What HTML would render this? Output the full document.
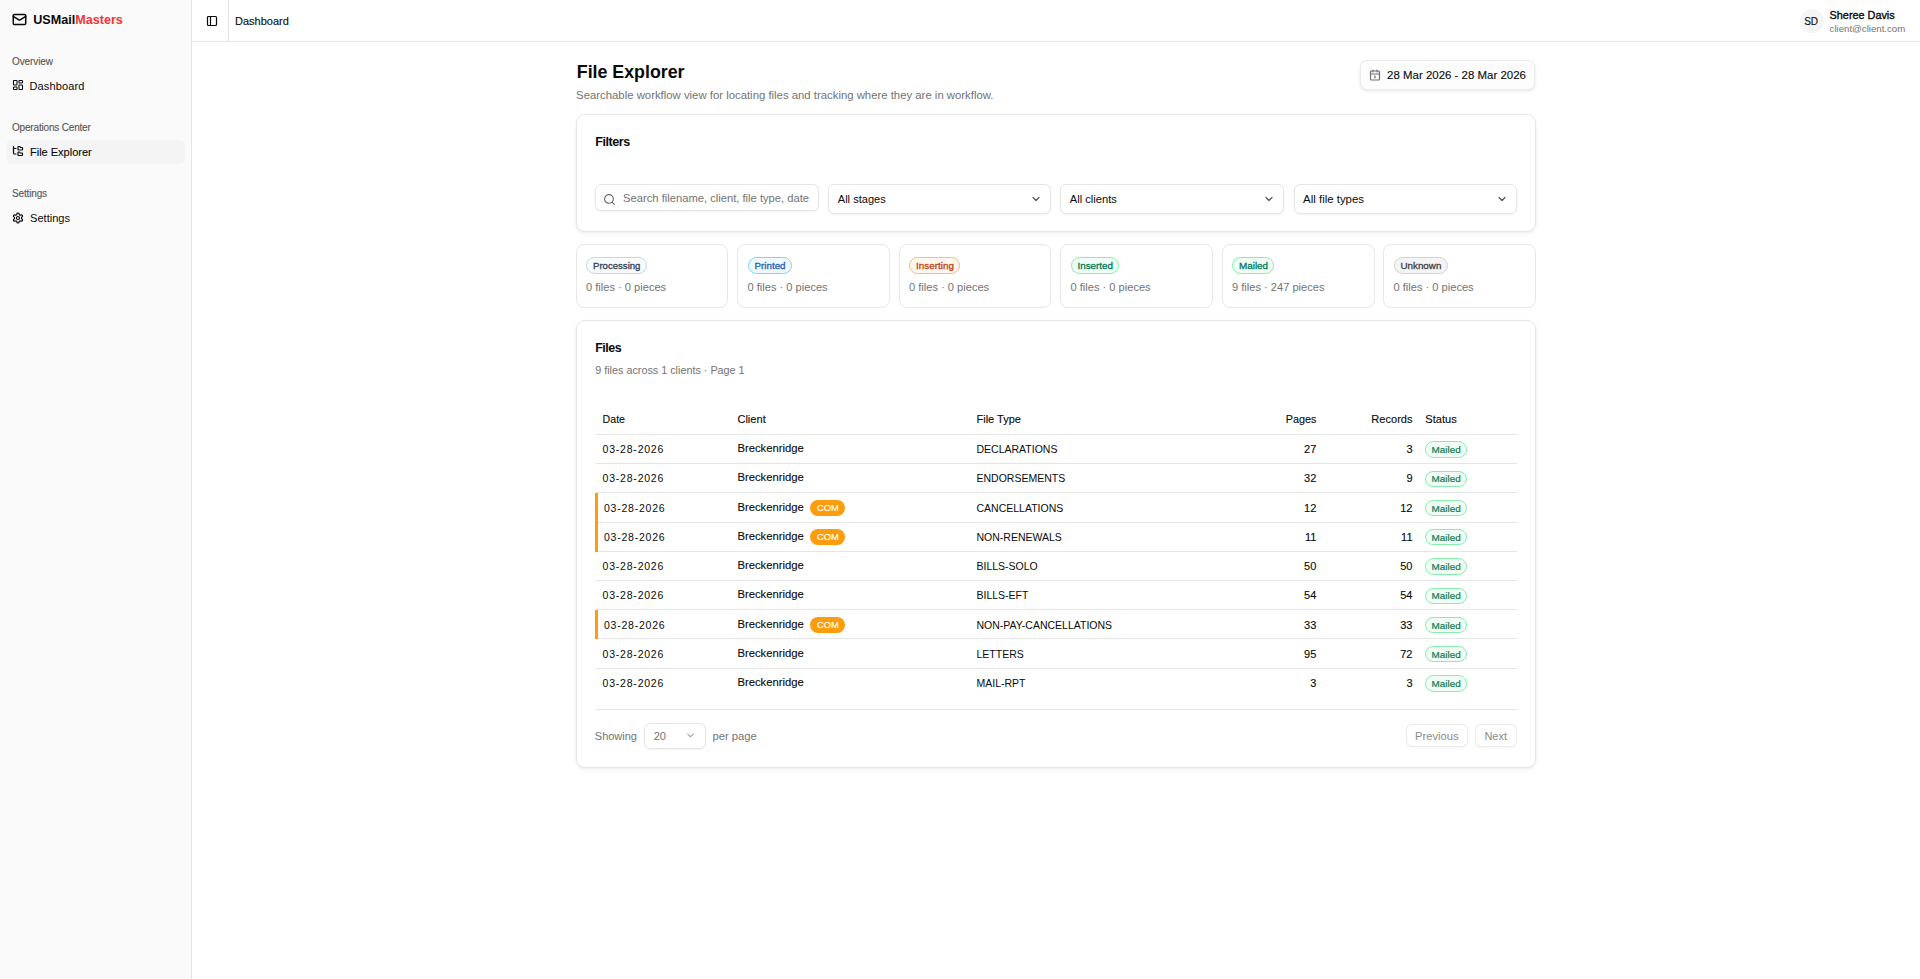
<!DOCTYPE html>
<html><head><meta charset="utf-8"><title>File Explorer</title>
<style>
html,body{margin:0;padding:0;background:#fff;}
body{width:1920px;height:979px;position:relative;overflow:hidden;font-family:"Liberation Sans",sans-serif;}
.t{position:absolute;white-space:nowrap;}
.b{position:absolute;}
.i{position:absolute;display:block;}
</style></head><body>
<div class="b" style="left:0px;top:0px;width:191px;height:979px;background:#fafafa;"></div>
<div class="b" style="left:191px;top:0px;width:1px;height:979px;background:#e5e5e5;"></div>
<svg class="i" style="left:12px;top:12px;" width="15" height="15" viewBox="0 0 24 24" fill="none" stroke="#0a0a0a" stroke-width="2.4" stroke-linecap="round" stroke-linejoin="round"><rect width="20" height="16" x="2" y="4" rx="2"/><path d="m22 7-8.97 5.7a1.94 1.94 0 0 1-2.06 0L2 7"/></svg>
<div class="t" style="top:12px;font-size:12.6px;line-height:16px;color:#0a0a0a;font-weight:700;left:33.20px;">USMail<span style="color:#ef3535">Masters</span></div>
<div class="t" style="top:54px;font-size:10px;line-height:16px;color:#555555;letter-spacing:-0.1px;-webkit-text-stroke:0.1px #555555;left:12.00px;">Overview</div>
<svg class="i" style="left:12px;top:79px;" width="12" height="12" viewBox="0 0 24 24" fill="none" stroke="#0a0a0a" stroke-width="2.2" stroke-linecap="round" stroke-linejoin="round"><rect width="7" height="9" x="3" y="3" rx="1"/><rect width="7" height="5" x="14" y="3" rx="1"/><rect width="7" height="9" x="14" y="12" rx="1"/><rect width="7" height="5" x="3" y="16" rx="1"/></svg>
<div class="t" style="top:78px;font-size:11px;line-height:16px;color:#0a0a0a;letter-spacing:0.15px;left:29.40px;">Dashboard</div>
<div class="t" style="top:120px;font-size:10px;line-height:16px;color:#555555;letter-spacing:-0.18px;-webkit-text-stroke:0.1px #555555;left:12.00px;">Operations Center</div>
<div class="b" style="left:6px;top:140px;width:179px;height:23.5px;background:#f4f4f4;border-radius:6px;"></div>
<svg class="i" style="left:12px;top:145.3px;" width="12" height="12" viewBox="0 0 24 24" fill="none" stroke="#0a0a0a" stroke-width="2.4" stroke-linecap="round" stroke-linejoin="round"><path d="M20 10a1 1 0 0 0 1-1V6a1 1 0 0 0-1-1h-2.5a1 1 0 0 1-.8-.4l-.9-1.2A1 1 0 0 0 15 3h-2a1 1 0 0 0-1 1v5a1 1 0 0 0 1 1Z"/><path d="M20 21a1 1 0 0 0 1-1v-3a1 1 0 0 0-1-1h-2.9a1 1 0 0 1-.88-.55l-.42-.85a1 1 0 0 0-.92-.6H13a1 1 0 0 0-1 1v5a1 1 0 0 0 1 1Z"/><path d="M3 5a2 2 0 0 0 2 2h3"/><path d="M3 3v13a2 2 0 0 0 2 2h3"/></svg>
<div class="t" style="top:144px;font-size:11px;line-height:16px;color:#0a0a0a;-webkit-text-stroke:0.12px #0a0a0a;left:30.00px;">File Explorer</div>
<div class="t" style="top:186px;font-size:10px;line-height:16px;color:#555555;letter-spacing:-0.15px;-webkit-text-stroke:0.1px #555555;left:12.00px;">Settings</div>
<svg class="i" style="left:12px;top:211.5px;" width="12" height="12" viewBox="0 0 24 24" fill="none" stroke="#0a0a0a" stroke-width="2.4" stroke-linecap="round" stroke-linejoin="round"><path d="M12.22 2h-.44a2 2 0 0 0-2 2v.18a2 2 0 0 1-1 1.73l-.43.25a2 2 0 0 1-2 0l-.15-.08a2 2 0 0 0-2.73.73l-.22.38a2 2 0 0 0 .73 2.73l.15.1a2 2 0 0 1 1 1.72v.51a2 2 0 0 1-1 1.74l-.15.09a2 2 0 0 0-.73 2.73l.22.38a2 2 0 0 0 2.73.73l.15-.08a2 2 0 0 1 2 0l.43.25a2 2 0 0 1 1 1.73V20a2 2 0 0 0 2 2h.44a2 2 0 0 0 2-2v-.18a2 2 0 0 1 1-1.73l.43-.25a2 2 0 0 1 2 0l.15.08a2 2 0 0 0 2.73-.73l.22-.39a2 2 0 0 0-.73-2.73l-.15-.08a2 2 0 0 1-1-1.74v-.5a2 2 0 0 1 1-1.74l.15-.09a2 2 0 0 0 .73-2.73l-.22-.38a2 2 0 0 0-2.73-.73l-.15.08a2 2 0 0 1-2 0l-.43-.25a2 2 0 0 1-1-1.73V4a2 2 0 0 0-2-2z"/><circle cx="12" cy="12" r="3"/></svg>
<div class="t" style="top:210px;font-size:11.1px;line-height:16px;color:#0a0a0a;left:30.00px;">Settings</div>
<div class="b" style="left:192px;top:41px;width:1728px;height:1px;background:#e5e5e5;"></div>
<svg class="i" style="left:205.5px;top:15px;" width="12" height="12" viewBox="0 0 24 24" fill="none" stroke="#0a0a0a" stroke-width="2.4" stroke-linecap="round" stroke-linejoin="round"><rect width="18" height="18" x="3" y="3" rx="2"/><path d="M9 3v18"/></svg>
<div class="b" style="left:228px;top:0px;width:1px;height:41px;background:#e5e5e5;"></div>
<div class="t" style="top:13px;font-size:11px;line-height:16px;color:#0a0a0a;-webkit-text-stroke:0.12px #0a0a0a;left:235.00px;">Dashboard</div>
<div class="b" style="left:1799.5px;top:9px;width:24px;height:24px;background:#f5f5f5;border-radius:50%;"></div>
<div class="t" style="top:14px;font-size:10px;line-height:16px;color:#0a0a0a;-webkit-text-stroke:0.12px #0a0a0a;left:1804.20px;">SD</div>
<div class="t" style="top:7px;font-size:10.85px;line-height:16px;color:#0a0a0a;-webkit-text-stroke:0.35px #0a0a0a;left:1829.60px;">Sheree Davis</div>
<div class="t" style="top:21px;font-size:9.65px;line-height:16px;color:#737373;left:1829.60px;">client@client.com</div>
<div class="t" style="top:64px;font-size:17.8px;line-height:16px;color:#0a0a0a;font-weight:700;left:576.80px;">File Explorer</div>
<div class="t" style="top:87px;font-size:11.35px;line-height:16px;color:#737373;left:576.10px;">Searchable workflow view for locating files and tracking where they are in workflow.</div>
<div class="b" style="left:1360px;top:60px;width:175px;height:29.5px;background:#fdfdfd;border:1px solid #ebebeb;border-radius:7px;box-shadow:0 1px 3px rgba(0,0,0,.07),0 2px 5px rgba(0,0,0,.03);box-sizing:border-box;"></div>
<svg class="i" style="left:1368.5px;top:69px;" width="12" height="12" viewBox="0 0 24 24" fill="none" stroke="#737373" stroke-width="2.4" stroke-linecap="round" stroke-linejoin="round"><path d="M11 14h1v4"/><path d="M16 2v4"/><path d="M3 10h18"/><path d="M8 2v4"/><rect x="3" y="4" width="18" height="18" rx="2"/></svg>
<div class="t" style="top:67px;font-size:11.46px;line-height:16px;color:#0a0a0a;-webkit-text-stroke:0.12px #0a0a0a;left:1387.10px;">28 Mar 2026 - 28 Mar 2026</div>
<div class="b" style="left:576px;top:114px;width:960px;height:118px;background:#fff;border:1px solid #e7e7ea;border-radius:9px;box-shadow:0 1px 2px rgba(0,0,0,.05),0 2px 6px rgba(0,0,0,.04);box-sizing:border-box;"></div>
<div class="t" style="top:134px;font-size:12.6px;line-height:16px;color:#0a0a0a;font-weight:700;letter-spacing:-0.45px;left:595.20px;">Filters</div>
<div class="b" style="left:595px;top:184px;width:223.5px;height:26.5px;background:#fff;border:1px solid #e5e5e5;border-radius:6px;box-shadow:0 1px 2px rgba(0,0,0,.05);box-sizing:border-box;"></div>
<svg class="i" style="left:603.4px;top:192.6px;" width="13" height="13" viewBox="0 0 24 24" fill="none" stroke="#6b6b6b" stroke-width="2.1" stroke-linecap="round" stroke-linejoin="round"><circle cx="11" cy="11" r="8"/><path d="m21 21-4.3-4.3"/></svg>
<div class="t" style="top:190px;font-size:11.19px;line-height:16px;color:#737373;left:623.10px;">Search filename, client, file type, date</div>
<div class="b" style="left:828px;top:184px;width:223px;height:29.5px;background:#fff;border:1px solid #e5e5e5;border-radius:6px;box-shadow:0 1px 2px rgba(0,0,0,.05);box-sizing:border-box;"></div>
<div class="t" style="top:191px;font-size:11.06px;line-height:16px;color:#0a0a0a;left:837.80px;">All stages</div>
<svg class="i" style="left:1030px;top:192.9px;" width="12" height="12" viewBox="0 0 24 24" fill="none" stroke="#525252" stroke-width="2.4" stroke-linecap="round" stroke-linejoin="round"><path d="m6 9 6 6 6-6"/></svg>
<div class="b" style="left:1060px;top:184px;width:224px;height:29.5px;background:#fff;border:1px solid #e5e5e5;border-radius:6px;box-shadow:0 1px 2px rgba(0,0,0,.05);box-sizing:border-box;"></div>
<div class="t" style="top:191px;font-size:11.14px;line-height:16px;color:#0a0a0a;left:1069.80px;">All clients</div>
<svg class="i" style="left:1263.3px;top:192.9px;" width="12" height="12" viewBox="0 0 24 24" fill="none" stroke="#525252" stroke-width="2.4" stroke-linecap="round" stroke-linejoin="round"><path d="m6 9 6 6 6-6"/></svg>
<div class="b" style="left:1294px;top:184px;width:223px;height:29.5px;background:#fff;border:1px solid #e5e5e5;border-radius:6px;box-shadow:0 1px 2px rgba(0,0,0,.05);box-sizing:border-box;"></div>
<div class="t" style="top:191px;font-size:11.43px;line-height:16px;color:#0a0a0a;left:1303.10px;">All file types</div>
<svg class="i" style="left:1495.6px;top:192.9px;" width="12" height="12" viewBox="0 0 24 24" fill="none" stroke="#525252" stroke-width="2.4" stroke-linecap="round" stroke-linejoin="round"><path d="m6 9 6 6 6-6"/></svg>
<div class="b" style="left:576px;top:244px;width:152px;height:64px;background:#fff;border:1px solid #e8e8e8;border-radius:8px;box-sizing:border-box;"></div>
<div class="b" style="left:586.0px;top:257px;width:61px;height:16.5px;background:#f8fafc;border:1px solid #cbd5e1;border-radius:9px;box-sizing:border-box;"></div>
<div class="t" style="top:258px;font-size:9.61px;line-height:16px;color:#334155;-webkit-text-stroke:0.3px #334155;left:593.00px;">Processing</div>
<div class="t" style="top:279px;font-size:11.1px;line-height:16px;color:#737373;left:586.00px;">0 files · 0 pieces</div>
<div class="b" style="left:737px;top:244px;width:153px;height:64px;background:#fff;border:1px solid #e8e8e8;border-radius:8px;box-sizing:border-box;"></div>
<div class="b" style="left:747.5px;top:257px;width:44.5px;height:16.5px;background:#f0f9ff;border:1px solid #7dd3fc;border-radius:9px;box-sizing:border-box;"></div>
<div class="t" style="top:258px;font-size:9.8px;line-height:16px;color:#1d5fb8;-webkit-text-stroke:0.3px #1d5fb8;left:754.50px;">Printed</div>
<div class="t" style="top:279px;font-size:11.1px;line-height:16px;color:#737373;left:747.50px;">0 files · 0 pieces</div>
<div class="b" style="left:899px;top:244px;width:152px;height:64px;background:#fff;border:1px solid #e8e8e8;border-radius:8px;box-sizing:border-box;"></div>
<div class="b" style="left:909.0px;top:257px;width:51px;height:16.5px;background:#fff7ed;border:1px solid #fdba74;border-radius:9px;box-sizing:border-box;"></div>
<div class="t" style="top:258px;font-size:9.9px;line-height:16px;color:#c2410c;-webkit-text-stroke:0.3px #c2410c;left:916.00px;">Inserting</div>
<div class="t" style="top:279px;font-size:11.1px;line-height:16px;color:#737373;left:909.00px;">0 files · 0 pieces</div>
<div class="b" style="left:1060px;top:244px;width:153px;height:64px;background:#fff;border:1px solid #e8e8e8;border-radius:8px;box-sizing:border-box;"></div>
<div class="b" style="left:1070.5px;top:257px;width:48.5px;height:16.5px;background:#f0fdf4;border:1px solid #86efac;border-radius:9px;box-sizing:border-box;"></div>
<div class="t" style="top:258px;font-size:9.84px;line-height:16px;color:#047857;-webkit-text-stroke:0.3px #047857;left:1077.50px;">Inserted</div>
<div class="t" style="top:279px;font-size:11.1px;line-height:16px;color:#737373;left:1070.50px;">0 files · 0 pieces</div>
<div class="b" style="left:1222px;top:244px;width:153px;height:64px;background:#fff;border:1px solid #e8e8e8;border-radius:8px;box-sizing:border-box;"></div>
<div class="b" style="left:1232.0px;top:257px;width:42.4px;height:16.5px;background:#f0fdf4;border:1px solid #86efac;border-radius:9px;box-sizing:border-box;"></div>
<div class="t" style="top:258px;font-size:9.9px;line-height:16px;color:#047857;-webkit-text-stroke:0.3px #047857;left:1239.00px;">Mailed</div>
<div class="t" style="top:279px;font-size:11.1px;line-height:16px;color:#737373;left:1232.00px;">9 files · 247 pieces</div>
<div class="b" style="left:1383px;top:244px;width:153px;height:64px;background:#fff;border:1px solid #e8e8e8;border-radius:8px;box-sizing:border-box;"></div>
<div class="b" style="left:1393.5px;top:257px;width:54.1px;height:16.5px;background:#f4f4f5;border:1px solid #d4d4d8;border-radius:9px;box-sizing:border-box;"></div>
<div class="t" style="top:258px;font-size:9.8px;line-height:16px;color:#3f3f46;-webkit-text-stroke:0.3px #3f3f46;left:1400.50px;">Unknown</div>
<div class="t" style="top:279px;font-size:11.1px;line-height:16px;color:#737373;left:1393.50px;">0 files · 0 pieces</div>
<div class="b" style="left:576px;top:320px;width:960px;height:448px;background:#fff;border:1px solid #e7e7ea;border-radius:9px;box-shadow:0 1px 2px rgba(0,0,0,.05),0 2px 6px rgba(0,0,0,.04);box-sizing:border-box;"></div>
<div class="t" style="top:340px;font-size:12.5px;line-height:16px;color:#0a0a0a;font-weight:700;letter-spacing:-0.5px;left:595.20px;">Files</div>
<div class="t" style="top:362px;font-size:10.8px;line-height:16px;color:#737373;left:595.20px;">9 files across 1 clients · Page 1</div>
<div class="t" style="top:411px;font-size:10.6px;line-height:16px;color:#0a0a0a;-webkit-text-stroke:0.12px #0a0a0a;left:602.60px;">Date</div>
<div class="t" style="top:411px;font-size:11.1px;line-height:16px;color:#0a0a0a;-webkit-text-stroke:0.12px #0a0a0a;left:737.40px;">Client</div>
<div class="t" style="top:411px;font-size:11px;line-height:16px;color:#0a0a0a;-webkit-text-stroke:0.12px #0a0a0a;left:976.50px;">File Type</div>
<div class="t" style="top:411px;font-size:10.8px;line-height:16px;color:#0a0a0a;-webkit-text-stroke:0.12px #0a0a0a;right:603.70px;">Pages</div>
<div class="t" style="top:411px;font-size:11.05px;line-height:16px;color:#0a0a0a;-webkit-text-stroke:0.12px #0a0a0a;right:507.50px;">Records</div>
<div class="t" style="top:411px;font-size:11.1px;line-height:16px;color:#0a0a0a;-webkit-text-stroke:0.12px #0a0a0a;left:1425.30px;">Status</div>
<div class="b" style="left:596px;top:434px;width:921px;height:1px;background:#e5e5e5;"></div>
<div class="b" style="left:596px;top:463px;width:921px;height:1px;background:#e5e5e5;"></div>
<div class="t" style="top:441px;font-size:10.5px;line-height:16px;color:#0a0a0a;letter-spacing:0.78px;left:602.60px;">03-28-2026</div>
<div class="t" style="top:440px;font-size:11.27px;line-height:16px;color:#0a0a0a;-webkit-text-stroke:0.12px #0a0a0a;left:737.40px;">Breckenridge</div>
<div class="t" style="top:441px;font-size:10.5px;line-height:16px;color:#0a0a0a;left:976.50px;">DECLARATIONS</div>
<div class="t" style="top:441px;font-size:11px;line-height:16px;color:#0a0a0a;-webkit-text-stroke:0.12px #0a0a0a;right:603.70px;">27</div>
<div class="t" style="top:441px;font-size:11px;line-height:16px;color:#0a0a0a;-webkit-text-stroke:0.12px #0a0a0a;right:507.50px;">3</div>
<div class="b" style="left:1424.7px;top:441.3px;width:42.2px;height:16.3px;background:#f0fdf4;border:1px solid #86efac;border-radius:9px;box-sizing:border-box;"></div>
<div class="t" style="top:442px;font-size:9.9px;line-height:16px;color:#0f7a55;-webkit-text-stroke:0.2px #0f7a55;left:1431.60px;">Mailed</div>
<div class="b" style="left:596px;top:492px;width:921px;height:1px;background:#e5e5e5;"></div>
<div class="t" style="top:470px;font-size:10.5px;line-height:16px;color:#0a0a0a;letter-spacing:0.78px;left:602.60px;">03-28-2026</div>
<div class="t" style="top:469px;font-size:11.27px;line-height:16px;color:#0a0a0a;-webkit-text-stroke:0.12px #0a0a0a;left:737.40px;">Breckenridge</div>
<div class="t" style="top:470px;font-size:10.5px;line-height:16px;color:#0a0a0a;left:976.50px;">ENDORSEMENTS</div>
<div class="t" style="top:470px;font-size:11px;line-height:16px;color:#0a0a0a;-webkit-text-stroke:0.12px #0a0a0a;right:603.70px;">32</div>
<div class="t" style="top:470px;font-size:11px;line-height:16px;color:#0a0a0a;-webkit-text-stroke:0.12px #0a0a0a;right:507.50px;">9</div>
<div class="b" style="left:1424.7px;top:470.55px;width:42.2px;height:16.3px;background:#f0fdf4;border:1px solid #86efac;border-radius:9px;box-sizing:border-box;"></div>
<div class="t" style="top:471px;font-size:9.9px;line-height:16px;color:#0f7a55;-webkit-text-stroke:0.2px #0f7a55;left:1431.60px;">Mailed</div>
<div class="b" style="left:598px;top:522px;width:919px;height:1px;background:#e5e5e5;"></div>
<div class="b" style="left:595px;top:492.5px;width:3px;height:29.75px;background:#fd9d0e;"></div>
<div class="t" style="top:500px;font-size:10.5px;line-height:16px;color:#0a0a0a;letter-spacing:0.78px;left:603.90px;">03-28-2026</div>
<div class="t" style="top:499px;font-size:11.27px;line-height:16px;color:#0a0a0a;-webkit-text-stroke:0.12px #0a0a0a;left:737.40px;">Breckenridge</div>
<div class="b" style="left:810px;top:499.8px;width:35px;height:16px;background:#fd9d0e;border-radius:8px;"></div>
<div class="t" style="top:500px;font-size:9.35px;line-height:16px;color:#fff;-webkit-text-stroke:0.15px #fff;left:817.10px;">COM</div>
<div class="t" style="top:500px;font-size:10.5px;line-height:16px;color:#0a0a0a;left:976.50px;">CANCELLATIONS</div>
<div class="t" style="top:500px;font-size:11px;line-height:16px;color:#0a0a0a;-webkit-text-stroke:0.12px #0a0a0a;right:603.70px;">12</div>
<div class="t" style="top:500px;font-size:11px;line-height:16px;color:#0a0a0a;-webkit-text-stroke:0.12px #0a0a0a;right:507.50px;">12</div>
<div class="b" style="left:1424.7px;top:499.8px;width:42.2px;height:16.3px;background:#f0fdf4;border:1px solid #86efac;border-radius:9px;box-sizing:border-box;"></div>
<div class="t" style="top:501px;font-size:9.9px;line-height:16px;color:#0f7a55;-webkit-text-stroke:0.2px #0f7a55;left:1431.60px;">Mailed</div>
<div class="b" style="left:598px;top:551px;width:919px;height:1px;background:#e5e5e5;"></div>
<div class="b" style="left:595px;top:521.75px;width:3px;height:29.75px;background:#fd9d0e;"></div>
<div class="t" style="top:529px;font-size:10.5px;line-height:16px;color:#0a0a0a;letter-spacing:0.78px;left:603.90px;">03-28-2026</div>
<div class="t" style="top:528px;font-size:11.27px;line-height:16px;color:#0a0a0a;-webkit-text-stroke:0.12px #0a0a0a;left:737.40px;">Breckenridge</div>
<div class="b" style="left:810px;top:529.05px;width:35px;height:16px;background:#fd9d0e;border-radius:8px;"></div>
<div class="t" style="top:529px;font-size:9.35px;line-height:16px;color:#fff;-webkit-text-stroke:0.15px #fff;left:817.10px;">COM</div>
<div class="t" style="top:529px;font-size:10.5px;line-height:16px;color:#0a0a0a;left:976.50px;">NON-RENEWALS</div>
<div class="t" style="top:529px;font-size:11px;line-height:16px;color:#0a0a0a;-webkit-text-stroke:0.12px #0a0a0a;right:603.70px;">11</div>
<div class="t" style="top:529px;font-size:11px;line-height:16px;color:#0a0a0a;-webkit-text-stroke:0.12px #0a0a0a;right:507.50px;">11</div>
<div class="b" style="left:1424.7px;top:529.05px;width:42.2px;height:16.3px;background:#f0fdf4;border:1px solid #86efac;border-radius:9px;box-sizing:border-box;"></div>
<div class="t" style="top:530px;font-size:9.9px;line-height:16px;color:#0f7a55;-webkit-text-stroke:0.2px #0f7a55;left:1431.60px;">Mailed</div>
<div class="b" style="left:596px;top:580px;width:921px;height:1px;background:#e5e5e5;"></div>
<div class="t" style="top:558px;font-size:10.5px;line-height:16px;color:#0a0a0a;letter-spacing:0.78px;left:602.60px;">03-28-2026</div>
<div class="t" style="top:557px;font-size:11.27px;line-height:16px;color:#0a0a0a;-webkit-text-stroke:0.12px #0a0a0a;left:737.40px;">Breckenridge</div>
<div class="t" style="top:558px;font-size:10.5px;line-height:16px;color:#0a0a0a;left:976.50px;">BILLS-SOLO</div>
<div class="t" style="top:558px;font-size:11px;line-height:16px;color:#0a0a0a;-webkit-text-stroke:0.12px #0a0a0a;right:603.70px;">50</div>
<div class="t" style="top:558px;font-size:11px;line-height:16px;color:#0a0a0a;-webkit-text-stroke:0.12px #0a0a0a;right:507.50px;">50</div>
<div class="b" style="left:1424.7px;top:558.3px;width:42.2px;height:16.3px;background:#f0fdf4;border:1px solid #86efac;border-radius:9px;box-sizing:border-box;"></div>
<div class="t" style="top:559px;font-size:9.9px;line-height:16px;color:#0f7a55;-webkit-text-stroke:0.2px #0f7a55;left:1431.60px;">Mailed</div>
<div class="b" style="left:596px;top:609px;width:921px;height:1px;background:#e5e5e5;"></div>
<div class="t" style="top:587px;font-size:10.5px;line-height:16px;color:#0a0a0a;letter-spacing:0.78px;left:602.60px;">03-28-2026</div>
<div class="t" style="top:586px;font-size:11.27px;line-height:16px;color:#0a0a0a;-webkit-text-stroke:0.12px #0a0a0a;left:737.40px;">Breckenridge</div>
<div class="t" style="top:587px;font-size:10.5px;line-height:16px;color:#0a0a0a;left:976.50px;">BILLS-EFT</div>
<div class="t" style="top:587px;font-size:11px;line-height:16px;color:#0a0a0a;-webkit-text-stroke:0.12px #0a0a0a;right:603.70px;">54</div>
<div class="t" style="top:587px;font-size:11px;line-height:16px;color:#0a0a0a;-webkit-text-stroke:0.12px #0a0a0a;right:507.50px;">54</div>
<div class="b" style="left:1424.7px;top:587.55px;width:42.2px;height:16.3px;background:#f0fdf4;border:1px solid #86efac;border-radius:9px;box-sizing:border-box;"></div>
<div class="t" style="top:588px;font-size:9.9px;line-height:16px;color:#0f7a55;-webkit-text-stroke:0.2px #0f7a55;left:1431.60px;">Mailed</div>
<div class="b" style="left:598px;top:638px;width:919px;height:1px;background:#e5e5e5;"></div>
<div class="b" style="left:595px;top:609.5px;width:3px;height:29.75px;background:#fd9d0e;"></div>
<div class="t" style="top:617px;font-size:10.5px;line-height:16px;color:#0a0a0a;letter-spacing:0.78px;left:603.90px;">03-28-2026</div>
<div class="t" style="top:616px;font-size:11.27px;line-height:16px;color:#0a0a0a;-webkit-text-stroke:0.12px #0a0a0a;left:737.40px;">Breckenridge</div>
<div class="b" style="left:810px;top:616.8px;width:35px;height:16px;background:#fd9d0e;border-radius:8px;"></div>
<div class="t" style="top:617px;font-size:9.35px;line-height:16px;color:#fff;-webkit-text-stroke:0.15px #fff;left:817.10px;">COM</div>
<div class="t" style="top:617px;font-size:10.5px;line-height:16px;color:#0a0a0a;left:976.50px;">NON-PAY-CANCELLATIONS</div>
<div class="t" style="top:617px;font-size:11px;line-height:16px;color:#0a0a0a;-webkit-text-stroke:0.12px #0a0a0a;right:603.70px;">33</div>
<div class="t" style="top:617px;font-size:11px;line-height:16px;color:#0a0a0a;-webkit-text-stroke:0.12px #0a0a0a;right:507.50px;">33</div>
<div class="b" style="left:1424.7px;top:616.8px;width:42.2px;height:16.3px;background:#f0fdf4;border:1px solid #86efac;border-radius:9px;box-sizing:border-box;"></div>
<div class="t" style="top:618px;font-size:9.9px;line-height:16px;color:#0f7a55;-webkit-text-stroke:0.2px #0f7a55;left:1431.60px;">Mailed</div>
<div class="b" style="left:596px;top:668px;width:921px;height:1px;background:#e5e5e5;"></div>
<div class="t" style="top:646px;font-size:10.5px;line-height:16px;color:#0a0a0a;letter-spacing:0.78px;left:602.60px;">03-28-2026</div>
<div class="t" style="top:645px;font-size:11.27px;line-height:16px;color:#0a0a0a;-webkit-text-stroke:0.12px #0a0a0a;left:737.40px;">Breckenridge</div>
<div class="t" style="top:646px;font-size:10.5px;line-height:16px;color:#0a0a0a;left:976.50px;">LETTERS</div>
<div class="t" style="top:646px;font-size:11px;line-height:16px;color:#0a0a0a;-webkit-text-stroke:0.12px #0a0a0a;right:603.70px;">95</div>
<div class="t" style="top:646px;font-size:11px;line-height:16px;color:#0a0a0a;-webkit-text-stroke:0.12px #0a0a0a;right:507.50px;">72</div>
<div class="b" style="left:1424.7px;top:646.05px;width:42.2px;height:16.3px;background:#f0fdf4;border:1px solid #86efac;border-radius:9px;box-sizing:border-box;"></div>
<div class="t" style="top:647px;font-size:9.9px;line-height:16px;color:#0f7a55;-webkit-text-stroke:0.2px #0f7a55;left:1431.60px;">Mailed</div>
<div class="t" style="top:675px;font-size:10.5px;line-height:16px;color:#0a0a0a;letter-spacing:0.78px;left:602.60px;">03-28-2026</div>
<div class="t" style="top:674px;font-size:11.27px;line-height:16px;color:#0a0a0a;-webkit-text-stroke:0.12px #0a0a0a;left:737.40px;">Breckenridge</div>
<div class="t" style="top:675px;font-size:10.5px;line-height:16px;color:#0a0a0a;left:976.50px;">MAIL-RPT</div>
<div class="t" style="top:675px;font-size:11px;line-height:16px;color:#0a0a0a;-webkit-text-stroke:0.12px #0a0a0a;right:603.70px;">3</div>
<div class="t" style="top:675px;font-size:11px;line-height:16px;color:#0a0a0a;-webkit-text-stroke:0.12px #0a0a0a;right:507.50px;">3</div>
<div class="b" style="left:1424.7px;top:675.3px;width:42.2px;height:16.3px;background:#f0fdf4;border:1px solid #86efac;border-radius:9px;box-sizing:border-box;"></div>
<div class="t" style="top:676px;font-size:9.9px;line-height:16px;color:#0f7a55;-webkit-text-stroke:0.2px #0f7a55;left:1431.60px;">Mailed</div>
<div class="b" style="left:596px;top:709px;width:921px;height:1px;background:#e5e5e5;"></div>
<div class="t" style="top:728px;font-size:11px;line-height:16px;color:#737373;left:594.80px;">Showing</div>
<div class="b" style="left:644px;top:722.5px;width:62px;height:26.3px;background:#fff;border:1px solid #e5e5e5;border-radius:6px;box-shadow:0 1px 2px rgba(0,0,0,.05);box-sizing:border-box;"></div>
<div class="t" style="top:728px;font-size:11px;line-height:16px;color:#737373;left:653.70px;">20</div>
<svg class="i" style="left:684.8px;top:730px;" width="11" height="11" viewBox="0 0 24 24" fill="none" stroke="#a3a3a3" stroke-width="2.4" stroke-linecap="round" stroke-linejoin="round"><path d="m6 9 6 6 6-6"/></svg>
<div class="t" style="top:728px;font-size:11.28px;line-height:16px;color:#737373;left:712.40px;">per page</div>
<div class="b" style="left:1405.6px;top:724.3px;width:62.7px;height:23px;background:#fff;border:1px solid #ebebeb;border-radius:6px;box-shadow:0 1px 2px rgba(0,0,0,.04);box-sizing:border-box;"></div>
<div class="t" style="top:728px;font-size:11.2px;line-height:16px;color:#8a8a8a;left:1415.10px;">Previous</div>
<div class="b" style="left:1474.7px;top:724.3px;width:42px;height:23px;background:#fff;border:1px solid #ebebeb;border-radius:6px;box-shadow:0 1px 2px rgba(0,0,0,.04);box-sizing:border-box;"></div>
<div class="t" style="top:728px;font-size:11.05px;line-height:16px;color:#8a8a8a;left:1484.40px;">Next</div>
</body></html>
